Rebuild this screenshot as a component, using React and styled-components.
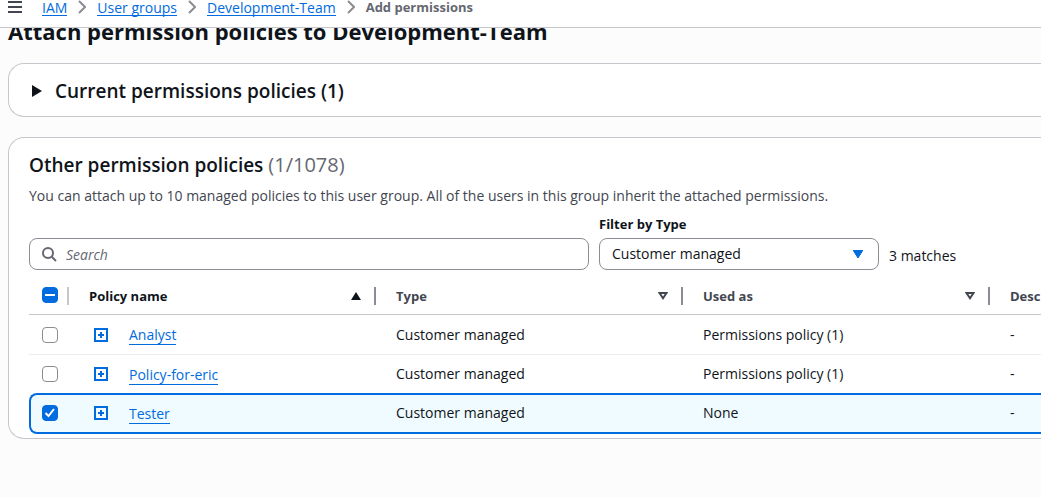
import React, { useEffect, useRef, useState } from "react";
import styled, { createGlobalStyle } from "styled-components";

const GlobalStyle = createGlobalStyle`
  *, *::before, *::after { box-sizing: border-box; }
  body {
    margin: 0;
    background: #fcfcfd;
    color: #0f141a;
    font: 400 14px/20px "Open Sans", "Noto Sans", sans-serif;
    overflow-x: hidden;
  }
  button, input, select { font: inherit; color: inherit; }
`;

const TopBar = styled.header`
  position: sticky;
  top: 0;
  z-index: 2;
  display: flex;
  align-items: flex-start;
  gap: 20px;
  height: 28px;
  padding-left: 8px;
  background: #fff;
  border-bottom: 1px solid #c6c6cd;
`;

const MenuButton = styled.button`
  display: flex;
  padding: 0;
  border: 0;
  background: none;
  color: #424650;
`;

const Crumbs = styled.ol`
  display: flex;
  align-items: flex-start;
  gap: 11px;
  margin: 0;
  padding: 0;
  list-style: none;
  line-height: 15px;
  white-space: nowrap;
`;

const Crumb = styled.li`
  display: flex;
  gap: 11px;
  color: #656871;
  font-size: ${(p) => (p.$current ? "13px" : "14px")};
  font-weight: ${(p) => (p.$current ? 700 : 400)};
`;

const Link = styled.a`
  color: #006ce0;
  text-decoration: none;
  border-bottom: 1px solid #006ce0;
`;

const Main = styled.main`
  padding-left: 8px;
`;

const PageTitle = styled.h1`
  margin: -12px 0 17px;
  font-size: 22px;
  line-height: 30px;
  font-weight: 700;
`;

const Card = styled.section`
  margin-bottom: 20px;
  padding: ${(p) => (p.$compact ? "12px 0 10px 20px" : "12px 0 4px 20px")};
  background: #fff;
  border: 1px solid #c6c6cd;
  border-right: 0;
  border-radius: 16px 0 0 16px;
  overflow: hidden;
`;

const CardTitle = styled.h2`
  margin: 0;
  font-size: 19px;
  line-height: 30px;
  font-weight: 600;
`;

const Count = styled.span`
  color: #656871;
  font-size: 20px;
  font-weight: 400;
`;

const Toggle = styled.button`
  display: flex;
  align-items: center;
  gap: 12px;
  padding: 0 0 0 2px;
  border: 0;
  background: none;
`;

const Description = styled.p`
  margin: 6px 0 8px;
  color: #424650;
  line-height: 20px;
`;

const Filters = styled.div`
  display: grid;
  grid-template-columns: 2fr 1fr 152px;
  align-items: end;
  gap: 10px;
`;

const FieldLabel = styled.label`
  display: block;
  margin-bottom: 4px;
  font-size: 13px;
  font-weight: 700;
`;

const Field = styled.div`
  position: relative;
`;

const FieldIcon = styled.svg`
  position: absolute;
  top: ${(p) => p.$top};
  left: ${(p) => p.$left || "auto"};
  right: ${(p) => p.$right || "auto"};
  pointer-events: none;
`;

const controlStyle = `
  display: block;
  width: 100%;
  height: 32px;
  background: #fff;
  border: 1px solid #8c8c94;
  border-radius: 8px;
`;

const SearchInput = styled.input`
  ${controlStyle}
  padding: 0 12px 0 36px;
  &::placeholder {
    color: #656871;
    font-style: italic;
    opacity: 1;
  }
`;

const Select = styled.select`
  ${controlStyle}
  appearance: none;
  padding: 0 32px 0 12px;
`;

const Matches = styled.span`
  line-height: 28px;
`;

const Table = styled.table`
  width: 100%;
  min-width: 1267px;
  margin-top: 7px;
  table-layout: fixed;
  border-collapse: separate;
  border-spacing: 0;
`;

const Col = styled.col`
  width: ${(p) => p.$width};
`;

const HeadCell = styled.th`
  position: relative;
  height: 38px;
  padding: ${(p) => (p.$select ? "0 0 1px 13px" : "0 15px 0 20px")};
  border-bottom: 1px solid #c6c6cd;
  color: ${(p) => (p.$sorted ? "#0f141a" : "#424650")};
  text-align: left;
  &::after {
    content: "";
    position: absolute;
    top: 10px;
    right: 0;
    width: 2px;
    height: 18px;
    background: ${(p) => (p.$select ? "#c6c6cd" : "#8c8c94")};
  }
`;

const SortButton = styled.button`
  display: flex;
  align-items: center;
  justify-content: space-between;
  width: 100%;
  padding: 0;
  border: 0;
  background: none;
  font-size: 13px;
  font-weight: 700;
`;

const Cell = styled.td`
  height: 38px;
  padding: 0 0 0 20px;
`;

const SelectCell = styled(Cell)`
  padding-left: 13px;
`;

const Row = styled.tr`
  ${Cell} {
    ${(p) => p.$divided && "height: 40px; border-bottom: 1px solid #ebebf0;"}
    ${(p) =>
      p.$selected &&
      `height: 41px;
       padding-bottom: 1px;
       background: #f0fbff;
       border-top: 2px solid #006ce0;
       border-bottom: 2px solid #006ce0;`}
  }
  ${SelectCell} {
    ${(p) =>
      p.$selected &&
      `padding-left: 11px;
       border-left: 2px solid #006ce0;
       border-radius: 8px 0 0 8px;`}
  }
`;

const NameGroup = styled.div`
  display: flex;
  align-items: center;
  gap: 21px;
  padding-left: 5px;
  line-height: 18px;
  ${Link} { padding-top: 2px; }
`;

const ExpandButton = styled.button`
  display: flex;
  padding: 0;
  border: 0;
  background: none;
  color: #006ce0;
`;

const TickBox = styled.span`
  display: grid;
  width: 16px;
  height: 16px;
  > * { grid-area: 1 / 1; }
  > svg { pointer-events: none; z-index: 1; }
`;

const TickInput = styled.input`
  appearance: none;
  width: 16px;
  height: 16px;
  margin: 0;
  background: #fff;
  border: 1px solid #8c8c94;
  border-radius: 4px;
  &:checked, &:indeterminate {
    background: #006ce0;
    border-color: #006ce0;
  }
`;

function Checkbox({ label, checked = false, indeterminate = false, onChange }) {
  const ref = useRef(null);
  useEffect(() => {
    ref.current.indeterminate = indeterminate;
  }, [indeterminate]);
  return (
    <TickBox>
      <TickInput ref={ref} type="checkbox" aria-label={label} checked={checked} onChange={onChange} />
      <svg width="16" height="16" viewBox="0 0 16 16" fill="none" stroke="#fff" strokeWidth="2" aria-hidden="true">
        {indeterminate && <path d="M3 8h10" />}
        {checked && !indeterminate && <path d="M3.500 8l3 3 5.500-7" />}
      </svg>
    </TickBox>
  );
}

const Chevron = () => (
  <svg width="8" height="14" viewBox="0 0 8 14" fill="none" stroke="#8c8c94" strokeWidth="2" aria-hidden="true">
    <path d="M1 1l6 6-6 6" />
  </svg>
);

const SortIcon = ({ sorted }) =>
  sorted ? (
    <svg width="10" height="8" viewBox="0 0 10 8" aria-hidden="true">
      <path d="M5 0l5 8H0z" fill="#0f141a" />
    </svg>
  ) : (
    <svg width="10" height="8" viewBox="0 0 10 8" fill="none" stroke="#424650" strokeWidth="2" aria-hidden="true">
      <path d="M1.500 1h7L5 6.200z" />
    </svg>
  );

const crumbs = ["IAM", "User groups", "Development-Team"];
const columns = ["Policy name", "Type", "Used as", "Description"];
const policies = [
  { name: "Analyst", type: "Customer managed", used: "Permissions policy (1)" },
  { name: "Policy-for-eric", type: "Customer managed", used: "Permissions policy (1)" },
  { name: "Tester", type: "Customer managed", used: "None" },
];

export default function App() {
  const [selected, setSelected] = useState(["Tester"]);
  const toggle = (name) =>
    setSelected((list) => (list.includes(name) ? list.filter((n) => n !== name) : [...list, name]));
  const all = selected.length === policies.length;

  return (
    <>
      <GlobalStyle />
      <TopBar>
        <MenuButton type="button" aria-label="Open navigation">
          <svg width="14" height="14" viewBox="0 0 14 14" stroke="currentColor" strokeWidth="2" aria-hidden="true">
            <path d="M0 2h14M0 7h14M0 12h14" />
          </svg>
        </MenuButton>
        <nav aria-label="Breadcrumbs">
          <Crumbs>
            {crumbs.map((name) => (
              <Crumb key={name}>
                <Link href="#">{name}</Link>
                <Chevron />
              </Crumb>
            ))}
            <Crumb $current aria-current="page">Add permissions</Crumb>
          </Crumbs>
        </nav>
      </TopBar>
      <Main>
        <PageTitle>Attach permission policies to Development-Team</PageTitle>
        <Card $compact>
          <CardTitle>
            <Toggle type="button" aria-expanded="false">
              <svg width="12" height="12" viewBox="0 0 12 12" aria-hidden="true">
                <path d="M1 0l10 6-10 6z" fill="#0f141a" />
              </svg>
              Current permissions policies (1)
            </Toggle>
          </CardTitle>
        </Card>
        <Card>
          <CardTitle>
            Other permission policies <Count>(1/1078)</Count>
          </CardTitle>
          <Description>
            You can attach up to 10 managed policies to this user group. All of the users in this group inherit the
            attached permissions.
          </Description>
          <Filters>
            <Field>
              <SearchInput type="search" placeholder="Search" aria-label="Search policies" />
              <FieldIcon $top="9px" $left="13px" width="15" height="15" viewBox="0 0 15 15" fill="none" stroke="#656871" strokeWidth="2" aria-hidden="true">
                <circle cx="6" cy="6" r="5" />
                <path d="M9.500 9.500l4.500 4.500" />
              </FieldIcon>
            </Field>
            <div>
              <FieldLabel htmlFor="type-filter">Filter by Type</FieldLabel>
              <Field>
                <Select id="type-filter" defaultValue="Customer managed">
                  <option>Customer managed</option>
                  <option>All types</option>
                </Select>
                <FieldIcon $top="12px" $right="16px" width="10" height="8" viewBox="0 0 10 8" aria-hidden="true">
                  <path d="M0 0h10L5 8z" fill="#006ce0" stroke="#006ce0" strokeLinejoin="round" />
                </FieldIcon>
              </Field>
            </div>
            <Matches>3 matches</Matches>
          </Filters>
          <Table>
            <colgroup>
              <Col $width="40px" />
              <Col $width="307px" />
              <Col $width="307px" />
              <Col $width="307px" />
              <Col />
            </colgroup>
            <thead>
              <tr>
                <HeadCell $select scope="col">
                  <Checkbox
                    label="Select all policies"
                    checked={all}
                    indeterminate={selected.length > 0 && !all}
                    onChange={() => setSelected(all ? [] : policies.map((p) => p.name))}
                  />
                </HeadCell>
                {columns.map((name, i) => (
                  <HeadCell key={name} scope="col" $sorted={i === 0} aria-sort={i === 0 ? "ascending" : "none"}>
                    <SortButton type="button">
                      {name}
                      <SortIcon sorted={i === 0} />
                    </SortButton>
                  </HeadCell>
                ))}
              </tr>
            </thead>
            <tbody>
              {policies.map(({ name, type, used }, i) => (
                <Row key={name} $selected={selected.includes(name)} $divided={i === 0}>
                  <SelectCell>
                    <Checkbox label={`Select ${name}`} checked={selected.includes(name)} onChange={() => toggle(name)} />
                  </SelectCell>
                  <Cell>
                    <NameGroup>
                      <ExpandButton type="button" aria-label={`Expand ${name}`}>
                        <svg width="14" height="14" viewBox="0 0 14 14" fill="none" stroke="currentColor" strokeWidth="2" aria-hidden="true">
                          <path d="M1 1h12v12H1zM4 7h6M7 4v6" />
                        </svg>
                      </ExpandButton>
                      <Link href="#">{name}</Link>
                    </NameGroup>
                  </Cell>
                  <Cell>{type}</Cell>
                  <Cell>{used}</Cell>
                  <Cell>-</Cell>
                </Row>
              ))}
            </tbody>
          </Table>
        </Card>
      </Main>
    </>
  );
}
